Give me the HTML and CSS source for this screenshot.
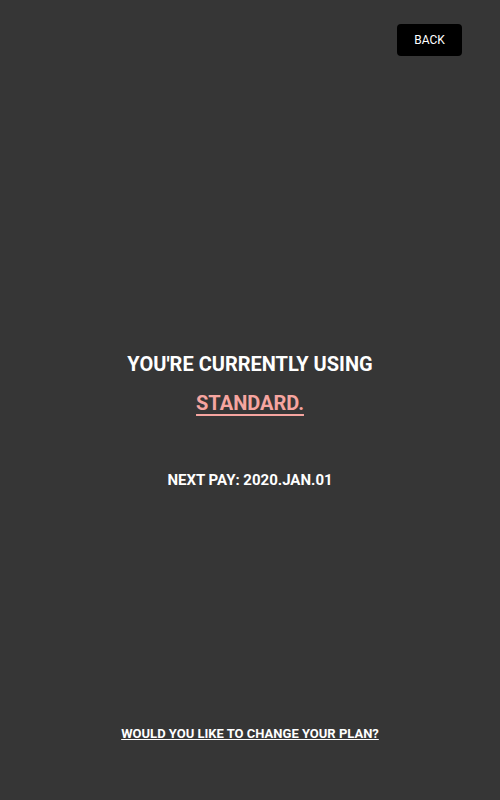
FILE: index.html
```html
<!DOCTYPE html>
<html>
<head>
<meta charset="utf-8">
<link rel="stylesheet" href="styles.css">
</head>
<body>
<div class="page">
  <header class="top">
    <button class="back">BACK</button>
  </header>
  <main class="plan">
    <h1 class="title">YOU'RE CURRENTLY USING</h1>
    <div class="plan-name">STANDARD.</div>
    <div class="next-pay">NEXT PAY: 2020.JAN.01</div>
  </main>
  <footer class="bottom">
    <a class="change" href="#">WOULD YOU LIKE TO CHANGE YOUR PLAN?</a>
  </footer>
</div>
</body>
</html>
```

FILE: styles.css
```css
* { box-sizing: border-box; }
html, body { margin: 0; padding: 0; }
body {
  background: #363636;
  font-family: Roboto, "Liberation Sans", sans-serif;
  color: #ffffff;
}
.page {
  width: 500px;
  height: 800px;
  display: flex;
  flex-direction: column;
}
.top {
  display: flex;
  justify-content: flex-end;
  padding: 24px 38px 0 0;
}
.back {
  width: 65px;
  height: 32px;
  background: #000;
  color: #fff;
  border: none;
  border-radius: 4px;
  font-family: Roboto, "Liberation Sans", sans-serif;
  font-size: 12px;
  padding: 0;
}
.plan {
  display: flex;
  flex-direction: column;
  align-items: center;
  padding-top: 296px;
}
.title {
  margin: 0;
  font-size: 20px;
  line-height: 24px;
  font-weight: 700;
}
.plan-name {
  margin-top: 15px;
  font-size: 20px;
  line-height: 24px;
  font-weight: 700;
  color: #f6a5a0;
  text-decoration: underline;
  text-decoration-thickness: 2px;
  text-underline-offset: 4px;
}
.next-pay {
  margin-top: 56px;
  font-size: 15px;
  line-height: 18px;
  font-weight: 700;
}
.bottom {
  margin-top: auto;
  padding-bottom: 58px;
  display: flex;
  justify-content: center;
}
.change {
  color: #fff;
  font-size: 13px;
  line-height: 16px;
  font-weight: 700;
  text-decoration: underline;
}
```
